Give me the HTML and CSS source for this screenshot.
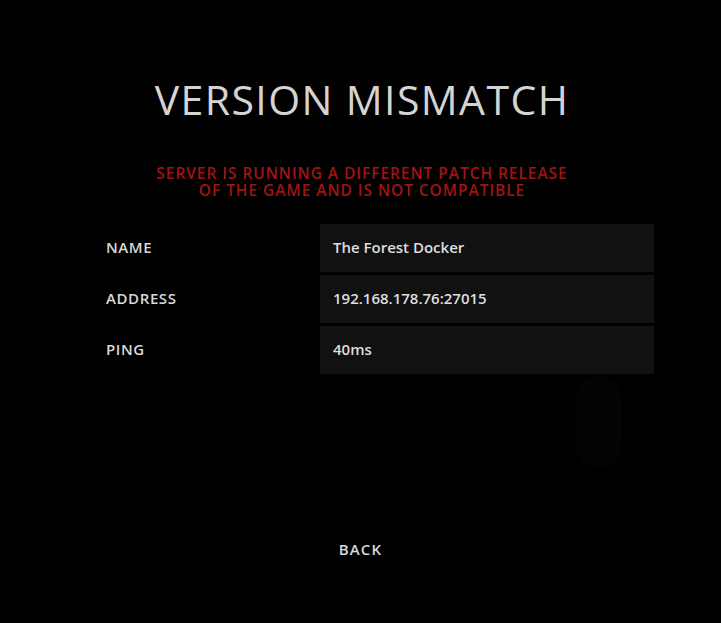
FILE: index.html
```html
<!DOCTYPE html>
<html>
<head>
  <meta charset="utf-8"/>
  <link rel="stylesheet" href="styles.css">
</head>
<body>
  <div class="screen">
    <h1 class="title">VERSION MISMATCH</h1>

    <p class="warning">SERVER IS RUNNING A DIFFERENT PATCH RELEASE<br>OF THE GAME AND IS NOT COMPATIBLE</p>

    <div class="info">
      <div class="row">
        <div class="label">NAME</div>
        <div class="value">The Forest Docker</div>
      </div>
      <div class="row">
        <div class="label">ADDRESS</div>
        <div class="value">192.168.178.76:27015</div>
      </div>
      <div class="row">
        <div class="label">PING</div>
        <div class="value">40ms</div>
      </div>
    </div>

    <div class="spacer"><div class="ghost"></div></div>

    <div class="back">BACK</div>
  </div>
</body>
</html>
```

FILE: styles.css
```css
body {
  margin: 0;
  background: #000;
  color: #dcdcdc;
  font-family: "Open Sans", "DejaVu Sans", sans-serif;
}
.screen {
  width: 721px;
  height: 623px;
  display: flex;
  flex-direction: column;
  align-items: center;
}
.title {
  margin: 76px 0 0 3px;
  font-size: 41px;
  font-weight: 400;
  line-height: 46px;
  color: #d4d4d4;
  letter-spacing: 1.4px;
}
.warning {
  margin: 43px 0 0 3px;
  font-size: 15.5px;
  line-height: 17px;
  font-weight: 600;
  color: #a11414;
  text-align: center;
  letter-spacing: 0.95px;
}
.info {
  margin-top: 25px;
  width: 548px;
  align-self: flex-start;
  margin-left: 106px;
  display: flex;
  flex-direction: column;
  gap: 3px;
}
.row {
  display: flex;
  height: 48px;
}
.label {
  width: 214px;
  display: flex;
  align-items: center;
  font-size: 15px;
  font-weight: 600;
  letter-spacing: 0.6px;
  color: #d8d8d8;
  padding-bottom: 2px;
}
.value {
  flex: 1;
  background: #111;
  display: flex;
  align-items: center;
  padding-left: 13px;
  padding-bottom: 2px;
  font-size: 15px;
  font-weight: 600;
  color: #dedede;
}
.spacer {
  height: 160px;
  width: 100%;
  position: relative;
}
.ghost {
  position: absolute;
  left: 576px;
  top: 2px;
  width: 46px;
  height: 92px;
  border-radius: 22px;
  background: #020403;
}
.back {
  margin-top: 5px;
  font-size: 15px;
  font-weight: 600;
  letter-spacing: 1.2px;
  color: #d8d8d8;
}
```
